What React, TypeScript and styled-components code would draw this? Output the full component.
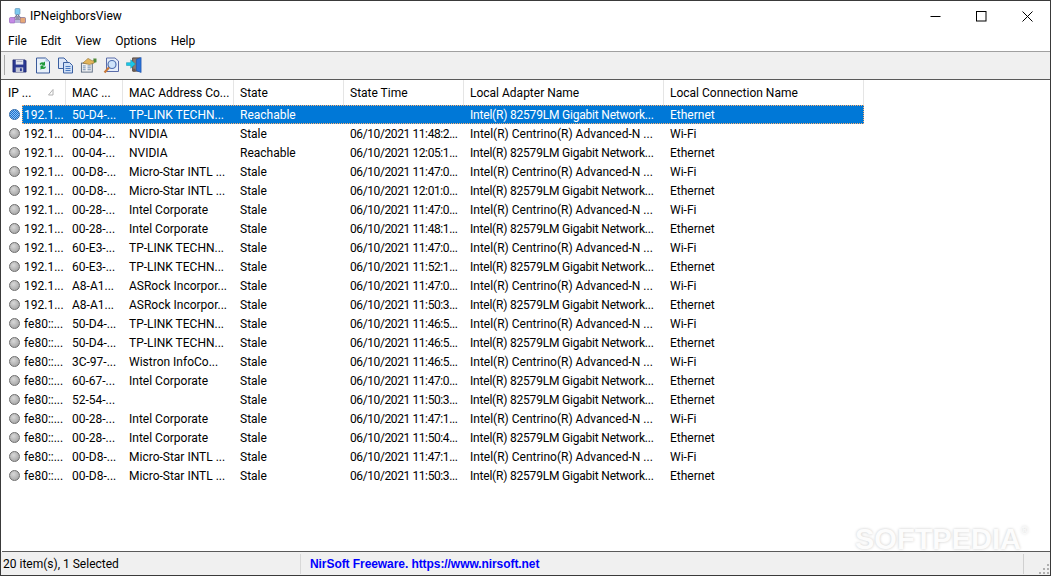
import React, { FC } from 'react';
import styled, { createGlobalStyle } from 'styled-components';

const GlobalStyle = createGlobalStyle`
  html, body {
    margin: 0;
    padding: 0;
    background: #fff;
    overflow: hidden;
  }
`;

const COLUMNS = [
  { title: 'IP ...', width: 64 },
  { title: 'MAC ...', width: 57 },
  { title: 'MAC Address Co...', width: 111 },
  { title: 'State', width: 110 },
  { title: 'State Time', width: 120 },
  { title: 'Local Adapter Name', width: 200 },
  { title: 'Local Connection Name', width: 200 },
];

const CENTRINO = 'Intel(R) Centrino(R) Advanced-N ...';
const GIGABIT = 'Intel(R) 82579LM Gigabit Network...';

const ROWS = [
  ['192.1...', '50-D4-...', 'TP-LINK TECHN...', 'Reachable', '', GIGABIT, 'Ethernet'],
  ['192.1...', '00-04-...', 'NVIDIA', 'Stale', '06/10/2021 11:48:2...', CENTRINO, 'Wi-Fi'],
  ['192.1...', '00-04-...', 'NVIDIA', 'Reachable', '06/10/2021 12:05:1...', GIGABIT, 'Ethernet'],
  ['192.1...', '00-D8-...', 'Micro-Star INTL ...', 'Stale', '06/10/2021 11:47:0...', CENTRINO, 'Wi-Fi'],
  ['192.1...', '00-D8-...', 'Micro-Star INTL ...', 'Stale', '06/10/2021 12:01:0...', GIGABIT, 'Ethernet'],
  ['192.1...', '00-28-...', 'Intel Corporate', 'Stale', '06/10/2021 11:47:0...', CENTRINO, 'Wi-Fi'],
  ['192.1...', '00-28-...', 'Intel Corporate', 'Stale', '06/10/2021 11:48:1...', GIGABIT, 'Ethernet'],
  ['192.1...', '60-E3-...', 'TP-LINK TECHN...', 'Stale', '06/10/2021 11:47:0...', CENTRINO, 'Wi-Fi'],
  ['192.1...', '60-E3-...', 'TP-LINK TECHN...', 'Stale', '06/10/2021 11:52:1...', GIGABIT, 'Ethernet'],
  ['192.1...', 'A8-A1...', 'ASRock Incorpor...', 'Stale', '06/10/2021 11:47:0...', CENTRINO, 'Wi-Fi'],
  ['192.1...', 'A8-A1...', 'ASRock Incorpor...', 'Stale', '06/10/2021 11:50:3...', GIGABIT, 'Ethernet'],
  ['fe80::...', '50-D4-...', 'TP-LINK TECHN...', 'Stale', '06/10/2021 11:46:5...', CENTRINO, 'Wi-Fi'],
  ['fe80::...', '50-D4-...', 'TP-LINK TECHN...', 'Stale', '06/10/2021 11:46:5...', GIGABIT, 'Ethernet'],
  ['fe80::...', '3C-97-...', 'Wistron InfoCo...', 'Stale', '06/10/2021 11:46:5...', CENTRINO, 'Wi-Fi'],
  ['fe80::...', '60-67-...', 'Intel Corporate', 'Stale', '06/10/2021 11:47:0...', GIGABIT, 'Ethernet'],
  ['fe80::...', '52-54-...', '', 'Stale', '06/10/2021 11:50:3...', GIGABIT, 'Ethernet'],
  ['fe80::...', '00-28-...', 'Intel Corporate', 'Stale', '06/10/2021 11:47:1...', CENTRINO, 'Wi-Fi'],
  ['fe80::...', '00-28-...', 'Intel Corporate', 'Stale', '06/10/2021 11:50:4...', GIGABIT, 'Ethernet'],
  ['fe80::...', '00-D8-...', 'Micro-Star INTL ...', 'Stale', '06/10/2021 11:47:1...', CENTRINO, 'Wi-Fi'],
  ['fe80::...', '00-D8-...', 'Micro-Star INTL ...', 'Stale', '06/10/2021 11:50:3...', GIGABIT, 'Ethernet'],
];

const MENUS = ['File', 'Edit', 'View', 'Options', 'Help'];

// digits are wider in Roboto than in the reference's font, so these get pulled in
const cellSpacing = (col: number, text: string) => {
  if (col === 4) return -0.4;
  if (text === GIGABIT) return -0.2;
  return 0;
};

const AppIcon = () => (
  <svg width="17" height="16" viewBox="0 0 17 16">
    <path d="M8.5 6 L4 12 M8.5 6 L13 12 M4 12 H13" stroke="#6a6a8a" strokeWidth="1.2" fill="none" />
    <rect x="6" y="0.5" width="5" height="6" rx="1" fill="#7cc8ee" stroke="#5a8ab0" strokeWidth=".6" />
    <rect x="6.5" y="8" width="4" height="4" fill="#9090a8" />
    <rect x="0.5" y="9.5" width="5.5" height="5.5" rx="1" fill="#c48ae6" stroke="#8a5ab0" strokeWidth=".6" />
    <rect x="11" y="9.5" width="5.5" height="5.5" rx="1" fill="#e6a878" stroke="#6a5a90" strokeWidth=".6" />
    <rect x="6" y="12" width="5" height="3" fill="#b8b8d8" />
  </svg>
);

const SaveIcon = () => (
  <svg width="15" height="15" viewBox="0 0 16 16">
    <path d="M1 2 H14 L15 3 V15 H1 Z" fill="#2c3a92" stroke="#1c2468" strokeWidth=".8" />
    <rect x="4" y="2" width="8" height="5" fill="#e4e6ee" />
    <rect x="5" y="3" width="6" height="1" fill="#9aa0b8" />
    <rect x="4" y="10" width="8" height="5" fill="#c4c8d8" />
    <rect x="8.5" y="11" width="2" height="3" fill="#2c3a92" />
  </svg>
);

const RefreshIcon = () => (
  <svg width="16" height="17" viewBox="0 0 16 17">
    <path d="M1.5 1 H10.5 L14.5 4.5 V16 H1.5 Z" fill="#e8f0fa" stroke="#3a5a9a" strokeWidth="1" />
    <path d="M10.5 1 V4.5 H14.5 Z" fill="#a8c0e0" />
    <path d="M4.5 7 Q5.5 4.6 8.5 5.4 L10 4.5 V8.5 H6.3 L7.5 7.3 Q6.1 6.8 5.5 8 Z" fill="#1f9a3a" />
    <path d="M11 10 Q10 12.6 7 11.8 L5.5 12.8 V8.8 H9.2 L8 10 Q9.4 10.5 10 9.3 Z" fill="#1f9a3a" />
  </svg>
);

const CopyIcon = () => (
  <svg width="17" height="17" viewBox="0 0 17 17">
    <path d="M1.5 1 H7 L10 4 V11.5 H1.5 Z" fill="#dfe8f8" stroke="#3a5fa0" strokeWidth="1" />
    <path d="M6.5 5.5 H12.5 L15.5 8.5 V16 H6.5 Z" fill="#cfdff6" stroke="#3a5fa0" strokeWidth="1" />
    <path d="M8.5 9.5 H13.5 M8.5 11.5 H13.5 M8.5 13.5 H13.5" stroke="#4a7ac0" strokeWidth="1" />
  </svg>
);

const PropsIcon = () => (
  <svg width="18" height="16" viewBox="0 0 18 16">
    <rect x="1.5" y="6" width="11.5" height="9.5" fill="#f2f2f2" stroke="#5a6a80" strokeWidth="1" />
    <path d="M3 9 H6 M8 9 H11.5 M3 11 H6 M8 11 H11.5 M3 13 H6 M8 13 H11.5" stroke="#6a8ab0" strokeWidth="1" />
    <path d="M3 6 L8.5 1 L13 3.5 L15 3 L15 6 L10 7.5 Z" fill="#e2b45a" stroke="#8a6a2a" strokeWidth=".6" />
    <path d="M14 1 L17.5 1 L17.5 5 L15 5.5 Z" fill="#4f8a3a" />
  </svg>
);

const FindIcon = () => (
  <svg width="17" height="17" viewBox="0 0 17 17">
    <path d="M3.5 1 H12 L15.5 4 V14.5 H3.5 Z" fill="#e6eefa" stroke="#5a6ca8" strokeWidth="1" />
    <circle cx="9" cy="7.5" r="4" fill="#cfe4fa" stroke="#5070b0" strokeWidth="1.2" />
    <path d="M6 10.5 L1.5 15.5" stroke="#c87838" strokeWidth="2.2" />
  </svg>
);

const ExitIcon = () => (
  <svg width="18" height="18" viewBox="0 0 18 18">
    <path d="M7 1.5 H15 V15.5 H7 Z" fill="#8a7a70" stroke="#4a3c36" strokeWidth=".9" />
    <path d="M11 3 L16 1 V17 L11 15 Z" fill="#2a72d8" stroke="#1a4aa0" strokeWidth=".6" />
    <path d="M7.5 13 H10 V16 H7.5 Z" fill="#6a5a50" />
    <path d="M0.5 6.5 H5 V3.5 L10 8 L5 12.5 V9.5 H0.5 Z" fill="#19c8e8" stroke="#0a8aa8" strokeWidth=".5" />
  </svg>
);

const TOOLS = [SaveIcon, RefreshIcon, CopyIcon, PropsIcon, FindIcon, ExitIcon];

const App: FC = () => (
  <>
    <GlobalStyle />
    <Window>
      <TitleBar>
        <TitleIcon>
          <AppIcon />
        </TitleIcon>
        <TitleText>IPNeighborsView</TitleText>
        <WindowButton>
          <svg width="11" height="11" viewBox="0 0 11 11">
            <path d="M0.5 5.5 H10.5" stroke="#000" strokeWidth="1" />
          </svg>
        </WindowButton>
        <WindowButton>
          <svg width="11" height="11" viewBox="0 0 11 11">
            <rect x="0.5" y="0.5" width="9.5" height="9.5" fill="none" stroke="#000" strokeWidth="1" />
          </svg>
        </WindowButton>
        <WindowButton>
          <svg width="11" height="11" viewBox="0 0 11 11">
            <path d="M0.5 0.5 L10.5 10.5 M10.5 0.5 L0.5 10.5" stroke="#000" strokeWidth="1" />
          </svg>
        </WindowButton>
      </TitleBar>

      <MenuBar>
        {MENUS.map(m => (
          <MenuItem key={m}>{m}</MenuItem>
        ))}
      </MenuBar>

      <Toolbar>
        <Gripper />
        {TOOLS.map((Icon, i) => (
          <ToolButton key={i}>
            <Icon />
          </ToolButton>
        ))}
      </Toolbar>

      <ListView>
        <HeaderRow>
          {COLUMNS.map((c, i) => (
            <HeaderCell key={c.title} width={c.width}>
              {c.title}
              {i === 0 && (
                <SortMark width="6" height="7" viewBox="0 0 6 7">
                  <path d="M5 0.5 L0.5 6 H5 Z" stroke="#b0b0b0" strokeWidth="1" fill="none" />
                </SortMark>
              )}
            </HeaderCell>
          ))}
        </HeaderRow>

        {ROWS.map((row, r) => (
          <Row key={r}>
            <DotBall selected={r === 0} />
            <RowCells selected={r === 0}>
              {row.map((text, i) => (
                <Cell
                  key={i}
                  width={i === 0 ? 44 : COLUMNS[i].width}
                  first={i === 0}
                  spacing={cellSpacing(i, text)}
                >
                  {text}
                </Cell>
              ))}
            </RowCells>
          </Row>
        ))}

        <Watermark>
          SOFTPEDIA
          <WatermarkMark>®</WatermarkMark>
        </Watermark>
      </ListView>

      <StatusBar>
        <StatusPane width={300}>20 item(s), 1 Selected</StatusPane>
        <StatusLink>NirSoft Freeware. https://www.nirsoft.net</StatusLink>
        <SizeGrip width="12" height="12" viewBox="0 0 12 12">
          <path d="M9 1h2v2H9zM5 5h2v2H5zM9 5h2v2H9zM1 9h2v2H1zM5 9h2v2H5zM9 9h2v2H9z" fill="#b0b0b0" />
        </SizeGrip>
      </StatusBar>
    </Window>
  </>
);

export default App;

const UI_FONT = `Roboto, "Noto Sans", Arial, sans-serif`;

const Window = styled.div`
  width: 1051px;
  height: 576px;
  box-sizing: border-box;
  display: flex;
  flex-direction: column;
  background: #fff;
  border: 1px solid #3a3a3a;
  font-family: ${UI_FONT};
  font-size: 12px;
  color: #000;
`;

const TitleBar = styled.div`
  height: 30px;
  flex: none;
  display: flex;
  align-items: center;
  padding-left: 8px;
`;

const TitleIcon = styled.div`
  width: 21px;
  height: 16px;
  display: flex;
`;

const TitleText = styled.div`
  flex: 1;
  font-size: 12px;
  line-height: 16px;
`;

const WindowButton = styled.div`
  width: 46px;
  height: 30px;
  display: flex;
  align-items: center;
  justify-content: center;
`;

const MenuBar = styled.div`
  height: 20px;
  flex: none;
  display: flex;
  align-items: center;
  gap: 14px;
  padding-left: 7px;
  border-bottom: 1px solid #a0a0a0;
`;

const MenuItem = styled.span`
  font-size: 12px;
`;

const Toolbar = styled.div`
  height: 28px;
  flex: none;
  box-sizing: border-box;
  display: flex;
  align-items: center;
  padding-left: 3px;
  padding-bottom: 1px;
  gap: 6px;
  background: #f0f0f0;
  border-bottom: 1px solid #5a5a5a;
`;

const Gripper = styled.div`
  width: 1px;
  height: 20px;
  background: #a8a8a8;
`;

const ToolButton = styled.div`
  width: 17px;
  height: 18px;
  display: flex;
  align-items: center;
  justify-content: center;
`;

const ListView = styled.div`
  flex: 1;
  position: relative;
  overflow: hidden;
  margin-left: 1px;
  border-bottom: 1px solid #5a5a5a;
`;

const HeaderRow = styled.div`
  height: 25px;
  display: flex;
`;

const HeaderCell = styled.div<{ width: number }>`
  width: ${p => p.width}px;
  flex: none;
  box-sizing: border-box;
  position: relative;
  padding-left: 6px;
  line-height: 27px;
  white-space: nowrap;
  border-right: 1px solid #e5e5e5;
`;

const SortMark = styled.svg`
  position: absolute;
  top: 9px;
  left: 46px;
`;

const Row = styled.div`
  height: 19px;
  display: flex;
  align-items: center;
`;

const DotBall = styled.div<{ selected: boolean }>`
  width: 11px;
  height: 11px;
  flex: none;
  margin: 0 2px 1px 7px;
  border-radius: 50%;
  box-sizing: border-box;
  border: 1px solid ${p => (p.selected ? '#2a66a8' : '#6e6e6e')};
  background: ${p =>
    p.selected
      ? 'repeating-conic-gradient(#1a6fd0 0 25%, #8cc4f4 0 50%) 0 0 / 2px 2px'
      : 'radial-gradient(circle at 40% 35%, #d8d8d8, #9a9a9a)'};
`;

const RowCells = styled.div<{ selected: boolean }>`
  display: flex;
  height: 19px;
  line-height: 21px;
  white-space: nowrap;
  background: ${p => (p.selected ? '#0078d7' : 'transparent')};
  color: ${p => (p.selected ? '#fff' : '#000')};
  outline: ${p => (p.selected ? '1px dotted #ffb070' : 'none')};
  outline-offset: -1px;
`;

const Cell = styled.div<{ width: number; first: boolean; spacing: number }>`
  width: ${p => p.width}px;
  height: 19px;
  flex: none;
  box-sizing: border-box;
  padding-left: ${p => (p.first ? 2 : 6)}px;
  letter-spacing: ${p => p.spacing}px;
  overflow: hidden;
`;

const Watermark = styled.div`
  position: absolute;
  right: 29px;
  bottom: 0;
  font-family: "Liberation Sans", Arial, sans-serif;
  font-size: 29px;
  line-height: 24px;
  font-weight: 700;
  color: #fcfcfc;
  text-shadow: 0 0 3px #c8c8c8;
  pointer-events: none;
`;

const WatermarkMark = styled.span`
  position: absolute;
  left: 100%;
  top: -1px;
  font-size: 10px;
  line-height: 10px;
  font-weight: 400;
`;

const StatusBar = styled.div`
  height: 23px;
  flex: none;
  display: flex;
  align-items: center;
  position: relative;
  background: #f0f0f0;
`;

const StatusPane = styled.div<{ width: number }>`
  width: ${p => p.width}px;
  box-sizing: border-box;
  padding-left: 2px;
  height: 20px;
  line-height: 21px;
  border-right: 1px solid #d8d8d8;
`;

const StatusLink = styled.div`
  flex: 1;
  height: 20px;
  line-height: 21px;
  padding-left: 9px;
  margin-right: 26px;
  border-right: 1px solid #d0d0d0;
  font-family: "Liberation Sans", Arial, sans-serif;
  font-size: 12px;
  font-weight: 700;
  letter-spacing: -0.07px;
  color: #0000ff;
`;

const SizeGrip = styled.svg`
  position: absolute;
  right: 0;
  bottom: 0;
`;
